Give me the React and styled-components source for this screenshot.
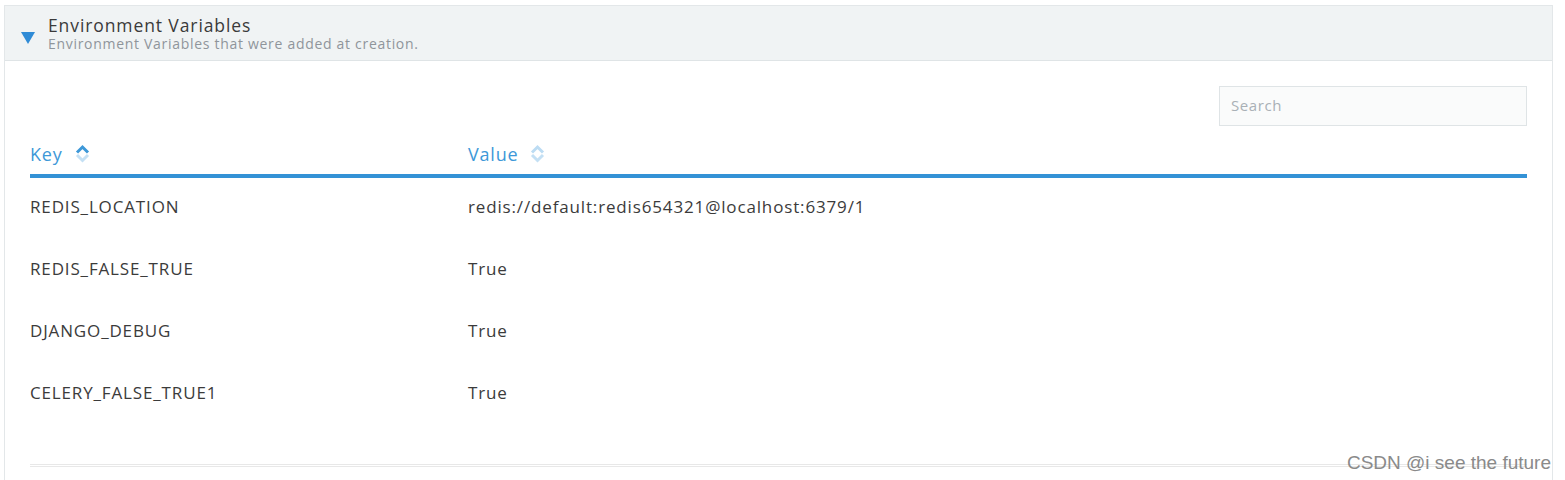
import styled, { createGlobalStyle } from 'styled-components';

const GlobalStyle = createGlobalStyle`
  body {
    margin: 0;
    background: #fff;
    font-family: "Open Sans", Lato, sans-serif;
    color: #3b3b3b;
  }
`;

const rows = [
  { key: 'REDIS_LOCATION', value: 'redis://default:redis654321@localhost:6379/1' },
  { key: 'REDIS_FALSE_TRUE', value: 'True' },
  { key: 'DJANGO_DEBUG', value: 'True' },
  { key: 'CELERY_FALSE_TRUE1', value: 'True' },
];

function SortIcon({ active }) {
  return (
    <svg width="15" height="19" viewBox="0 0 15 19">
      <path d="M2 8.5 L7.5 3 L13 8.5" fill="none" stroke={active ? '#3d98d8' : '#bcdcf3'} strokeWidth="3" />
      <path d="M2 11 L7.5 16.5 L13 11" fill="none" stroke="#c4e0f4" strokeWidth="3" />
    </svg>
  );
}

function App() {
  return (
    <Page>
      <GlobalStyle />
      <Panel>
        <Header>
          <Caret />
          <Titles>
            <Title>Environment Variables</Title>
            <Subtitle>Environment Variables that were added at creation.</Subtitle>
          </Titles>
        </Header>
        <Body>
          <Toolbar>
            <Search placeholder="Search" />
          </Toolbar>
          <Table>
            <HeadCell>Key <SortIcon active /></HeadCell>
            <HeadCell>Value <SortIcon /></HeadCell>
            <HeadBar />
            {rows.map((r) => (
              <Row key={r.key}>
                <Cell>{r.key}</Cell>
                <Cell>{r.value}</Cell>
              </Row>
            ))}
          </Table>
          <Footer />
        </Body>
      </Panel>
      <Watermark>CSDN @i see the future</Watermark>
    </Page>
  );
}

export default App;

const Page = styled.div`
  position: relative;
  height: 480px;
  overflow: hidden;
  padding: 5px 12px 0 4px;
  box-sizing: border-box;
`;

const Panel = styled.div`
  border: 1px solid #e3e7e9;
  border-bottom: none;
  height: 100%;
  box-sizing: border-box;
`;

const Header = styled.div`
  display: flex;
  align-items: center;
  height: 54px;
  padding-left: 16px;
  background: #f0f3f4;
  border-bottom: 1px solid #dfe4e6;
`;

const Caret = styled.div`
  width: 0;
  height: 0;
  border-left: 7.5px solid transparent;
  border-right: 7.5px solid transparent;
  border-top: 12px solid #2f8bd6;
  margin-top: 10px;
  margin-right: 13px;
`;

const Titles = styled.div`
  display: flex;
  flex-direction: column;
  margin-top: 1px;
`;

const Title = styled.div`
  font-size: 17.5px;
  line-height: 20px;
  letter-spacing: 0.9px;
  color: #3a3a3a;
`;

const Subtitle = styled.div`
  font-size: 14px;
  line-height: 18px;
  letter-spacing: 0.7px;
  color: #8f959b;
`;

const Body = styled.div`
  padding: 0 25px;
`;

const Toolbar = styled.div`
  display: flex;
  justify-content: flex-end;
  padding-top: 25px;
`;

const Search = styled.input`
  width: 308px;
  height: 40px;
  box-sizing: border-box;
  border: 1px solid #dfe4e6;
  background: #fafbfb;
  padding: 0 11px 2px;
  font-family: "Open Sans", Lato, sans-serif;
  font-size: 15px;
  letter-spacing: 0.6px;
  outline: none;
  &::placeholder {
    color: #a9b0b6;
  }
`;

const Table = styled.div`
  display: grid;
  grid-template-columns: 438px 1fr;
`;

const HeadCell = styled.div`
  display: flex;
  align-items: center;
  gap: 12px;
  height: 48px;
  padding-top: 7px;
  box-sizing: border-box;
  font-size: 18px;
  letter-spacing: 0.8px;
  color: #3d98d8;
`;

const HeadBar = styled.div`
  grid-column: 1 / -1;
  height: 4px;
  background: #3392d6;
`;

const Row = styled.div`
  display: contents;
`;

const Cell = styled.div`
  display: flex;
  align-items: center;
  height: 62px;
  padding-bottom: 5px;
  box-sizing: border-box;
  font-size: 17px;
  letter-spacing: 0.85px;
  color: #3b3b3b;
`;

const Footer = styled.div`
  margin-top: 38px;
  height: 1px;
  border-top: 1px solid #e8e8e8;
  border-bottom: 1px solid #e8e8e8;
`;

const Watermark = styled.div`
  position: absolute;
  right: 14px;
  top: 452px;
  font-family: "Liberation Sans", Arial, sans-serif;
  font-size: 19px;
  color: #8a8a8a;
`;
